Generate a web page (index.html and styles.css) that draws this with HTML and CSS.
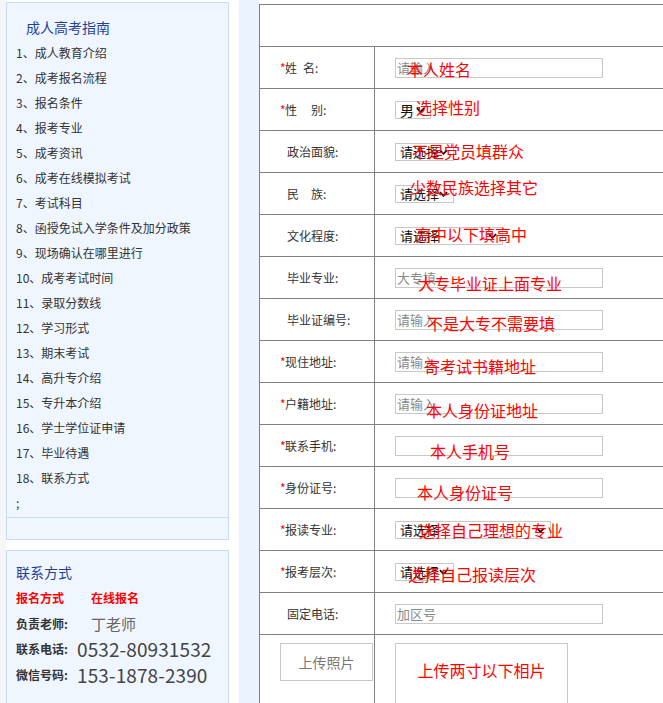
FILE: index.html
```html
<!DOCTYPE html>
<html lang="zh-CN">
<head>
<meta charset="utf-8">
<title>成人高考报名</title>
<link rel="stylesheet" href="styles.css">
</head>
<body>
<div class="page">
  <div class="edge"></div>
  <aside class="side">
    <div class="box guide">
      <h2 class="guide-title">成人高考指南</h2>
      <ul class="guide-list">
        <li>1、成人教育介绍</li>
        <li>2、成考报名流程</li>
        <li>3、报名条件</li>
        <li>4、报考专业</li>
        <li>5、成考资讯</li>
        <li>6、成考在线模拟考试</li>
        <li>7、考试科目</li>
        <li>8、函授免试入学条件及加分政策</li>
        <li>9、现场确认在哪里进行</li>
        <li>10、成考考试时间</li>
        <li>11、录取分数线</li>
        <li>12、学习形式</li>
        <li>13、期末考试</li>
        <li>14、高升专介绍</li>
        <li>15、专升本介绍</li>
        <li>16、学士学位证申请</li>
        <li>17、毕业待遇</li>
        <li>18、联系方式</li>
        <li>;</li>
      </ul>
      <div class="guide-foot"></div>
    </div>
    <div class="box contact">
      <h3 class="contact-title">联系方式</h3>
      <div class="c-row red"><span class="c-key">报名方式</span><span class="c-red">在线报名</span></div>
      <div class="c-row"><span class="c-key">负责老师:</span><span class="c-name">丁老师</span></div>
      <div class="c-row"><span class="c-key short">联系电话:</span><span class="c-num">0532-80931532</span></div>
      <div class="c-row"><span class="c-key short">微信号码:</span><span class="c-num">153-1878-2390</span></div>
      <div class="c-row addr"><span class="c-key">地&nbsp;&nbsp;&nbsp;&nbsp;址:</span></div>
    </div>
  </aside>
  <div class="strip"></div>
  <form class="form">
    <div class="f-head"></div>

    <div class="f-row">
      <div class="f-label"><span class="star">*</span>姓<span class="g6"></span>名:</div>
      <div class="f-value"><input class="txt" placeholder="请输入"><span class="tip t1">本人姓名</span></div>
    </div>

    <div class="f-row">
      <div class="f-label"><span class="star">*</span>性<span class="g14"></span>别:</div>
      <div class="f-value">
        <span class="sel"><select class="w36"><option>男</option><option>女</option></select><svg class="chev" viewBox="0 0 10 6"><path d="M1 1 L5 5 L9 1"/></svg></span>
        <span class="tip t2">选择性别</span>
      </div>
    </div>

    <div class="f-row">
      <div class="f-label nostar">政治面貌:</div>
      <div class="f-value">
        <span class="sel"><select class="w59"><option>请选择</option></select><svg class="chev" viewBox="0 0 10 6"><path d="M1 1 L5 5 L9 1"/></svg></span>
        <span class="tip t3">不是党员填群众</span>
      </div>
    </div>

    <div class="f-row">
      <div class="f-label nostar">民<span class="g12"></span>族:</div>
      <div class="f-value">
        <span class="sel"><select class="w59"><option>请选择</option></select><svg class="chev" viewBox="0 0 10 6"><path d="M1 1 L5 5 L9 1"/></svg></span>
        <span class="tip t4">少数民族选择其它</span>
      </div>
    </div>

    <div class="f-row">
      <div class="f-label nostar">文化程度:</div>
      <div class="f-value">
        <span class="sel"><select class="w108"><option>请选择</option></select><svg class="chev" viewBox="0 0 10 6"><path d="M1 1 L5 5 L9 1"/></svg></span>
        <span class="tip t5">高中以下填高中</span>
      </div>
    </div>

    <div class="f-row">
      <div class="f-label nostar">毕业专业:</div>
      <div class="f-value"><input class="txt" placeholder="大专填"><span class="tip t6">大专毕业证上面专业</span></div>
    </div>

    <div class="f-row">
      <div class="f-label nostar">毕业证编号:</div>
      <div class="f-value"><input class="txt" placeholder="请输入"><span class="tip t7">不是大专不需要填</span></div>
    </div>

    <div class="f-row">
      <div class="f-label"><span class="star">*</span>现住地址:</div>
      <div class="f-value"><input class="txt" placeholder="请输入"><span class="tip t8">寄考试书籍地址</span></div>
    </div>

    <div class="f-row">
      <div class="f-label"><span class="star">*</span>户籍地址:</div>
      <div class="f-value"><input class="txt" placeholder="请输入"><span class="tip t9">本人身份证地址</span></div>
    </div>

    <div class="f-row">
      <div class="f-label"><span class="star">*</span>联系手机:</div>
      <div class="f-value"><input class="txt"><span class="tip t10">本人手机号</span></div>
    </div>

    <div class="f-row">
      <div class="f-label"><span class="star">*</span>身份证号:</div>
      <div class="f-value"><input class="txt"><span class="tip t11">本人身份证号</span></div>
    </div>

    <div class="f-row">
      <div class="f-label"><span class="star">*</span>报读专业:</div>
      <div class="f-value">
        <span class="sel"><select class="w156"><option>请选择</option></select><svg class="chev" viewBox="0 0 10 6"><path d="M1 1 L5 5 L9 1"/></svg></span>
        <span class="tip t12">选择自己理想的专业</span>
      </div>
    </div>

    <div class="f-row">
      <div class="f-label"><span class="star">*</span>报考层次:</div>
      <div class="f-value">
        <span class="sel"><select class="w59"><option>请选择</option></select><svg class="chev" viewBox="0 0 10 6"><path d="M1 1 L5 5 L9 1"/></svg></span>
        <span class="tip t13">选择自己报读层次</span>
      </div>
    </div>

    <div class="f-row">
      <div class="f-label nostar">固定电话:</div>
      <div class="f-value"><input class="txt" placeholder="加区号"></div>
    </div>

    <div class="f-row photo">
      <div class="f-label"><button type="button" class="upload">上传照片</button></div>
      <div class="f-value"><div class="photo-box">上传两寸以下相片</div></div>
    </div>
  </form>
</div>
</body>
</html>
```

FILE: styles.css
```css
* { box-sizing: border-box; }
html, body { margin: 0; padding: 0; }
body {
  background: #fff;
  overflow: hidden;
  font-family: "Noto Sans CJK SC", "Noto Sans", sans-serif;
  color: #333;
  width: 663px;
  height: 703px;
}
.page {
  display: flex;
  align-items: flex-start;
  width: 900px;
}
.edge {
  width: 6px;
  height: 703px;
  background: #f5f6f8;
  flex: none;
}
.side {
  width: 223px;
  flex: none;
  margin-top: 2px;
}
.box {
  background: #eff6ff;
  border: 1px solid #c9dcf6;
}
.guide-title {
  margin: 0;
  padding: 12px 0 0 19px;
  font-size: 14px;
  font-weight: normal;
  line-height: 25px;
  color: #1f3f99;
}
.guide-list {
  list-style: none;
  margin: 0;
  padding: 0 0 2px 9px;
}
.guide-list li {
  font-size: 12px;
  line-height: 25px;
  height: 25px;
  color: #333;
  white-space: nowrap;
}
.guide-foot {
  height: 22px;
  border-top: 1px solid #c9dcf6;
}
.contact {
  margin-top: 10px;
  padding: 8px 0 0 9px;
  height: 200px;
}
.contact-title {
  margin: 0;
  font-size: 14px;
  font-weight: normal;
  line-height: 26px;
  color: #1f3f99;
}
.c-row {
  display: flex;
  align-items: center;
  height: 25.5px;
  white-space: nowrap;
}
.c-key {
  width: 75px;
  font-size: 12px;
  font-weight: bold;
  color: #333;
}
.c-key.short { width: 61px; }
.red .c-key, .c-red {
  color: #f00;
  font-size: 12px;
  font-weight: bold;
}
.c-name {
  font-size: 15px;
  color: #666;
}
.c-num {
  font-size: 19px;
  color: #444;
  letter-spacing: 0.1px;
}
.addr { margin-top: 9px; }
.strip {
  width: 20px;
  height: 703px;
  margin-left: 10px;
  background: #ebf4fe;
  flex: none;
}
.form {
  margin: 4px 0 0;
  width: 430px;
  flex: none;
  border-top: 1px solid #808080;
  border-left: 1px solid #808080;
  border-right: 1px solid #808080;
}
.f-head {
  height: 42px;
  border-bottom: 1px solid #808080;
}
.f-row {
  display: flex;
  height: 42px;
  border-bottom: 1px solid #808080;
}
.f-label {
  width: 115px;
  flex: none;
  border-right: 1px solid #808080;
  padding-left: 20px;
  display: flex;
  align-items: center;
  font-size: 12px;
  color: #333;
  white-space: nowrap;
}
.f-label.nostar { padding-left: 27px; }
.star {
  color: #f00;
  width: 5px;
  display: inline-block;
}
.g6 { display: inline-block; width: 6px; }
.g12 { display: inline-block; width: 12px; }
.g14 { display: inline-block; width: 14px; }
.f-value {
  flex: 1;
  position: relative;
  padding-left: 20px;
  display: flex;
  align-items: center;
}
.txt {
  width: 208px;
  height: 20px;
  border: 1px solid #c8c8c8;
  padding: 0 1px;
  margin: 0;
  font-family: "Noto Sans CJK SC", sans-serif;
  font-size: 13px;
  background: #fff;
  outline: none;
}
.txt::placeholder { color: #8a8a8a; }
.sel {
  position: relative;
  display: inline-block;
  height: 18px;
}
.sel select {
  -webkit-appearance: none;
  appearance: none;
  height: 18px;
  margin: 0;
  border: 1px solid #c8c8c8;
  border-radius: 0;
  background: #fff;
  padding: 0 0 0 4px;
  font-family: "Noto Sans CJK SC", sans-serif;
  font-size: 13px;
  line-height: 16px;
  color: #111;
  display: block;
}
.w36 { width: 36px; font-size: 14px !important; }
.w59 { width: 59px; }
.w108 { width: 108px; }
.w156 { width: 156px; }
.chev {
  position: absolute;
  right: 6px;
  top: 6px;
  width: 9px;
  height: 6px;
  fill: none;
  stroke: #111;
  stroke-width: 2;
  pointer-events: none;
}
.tip {
  position: absolute;
  font-size: 16px;
  line-height: 16px;
  color: #f00;
  white-space: nowrap;
  pointer-events: none;
}
.t1 { left: 32px; top: 14px; }
.t2 { left: 41px; top: 10px; }
.t3 { left: 37px; top: 12px; }
.t4 { left: 35px; top: 6px; }
.t5 { left: 40px; top: 11px; }
.t6 { left: 43px; top: 18px; }
.t7 { left: 52px; top: 16px; }
.t8 { left: 49px; top: 17px; }
.t9 { left: 51px; top: 19px; }
.t10 { left: 55px; top: 18px; }
.t11 { left: 42px; top: 17px; }
.t12 { left: 44px; top: 13px; }
.t13 { left: 33px; top: 15px; }
.photo {
  height: 130px;
  border-bottom: none;
}
.photo .f-label { align-items: flex-start; padding-top: 8px; }
.photo .f-value { align-items: flex-start; padding-top: 8px; }
.upload {
  width: 93px;
  height: 38px;
  margin: 0;
  border: 1px solid #c8c8c8;
  background: #fff;
  font-family: "Noto Sans CJK SC", sans-serif;
  font-size: 14px;
  color: #777;
  padding: 0;
}
.photo-box {
  width: 173px;
  height: 110px;
  border: 1px solid #c8c8c8;
  text-align: center;
  padding-top: 17px;
  font-size: 16px;
  line-height: 18px;
  color: #f00;
}
```
